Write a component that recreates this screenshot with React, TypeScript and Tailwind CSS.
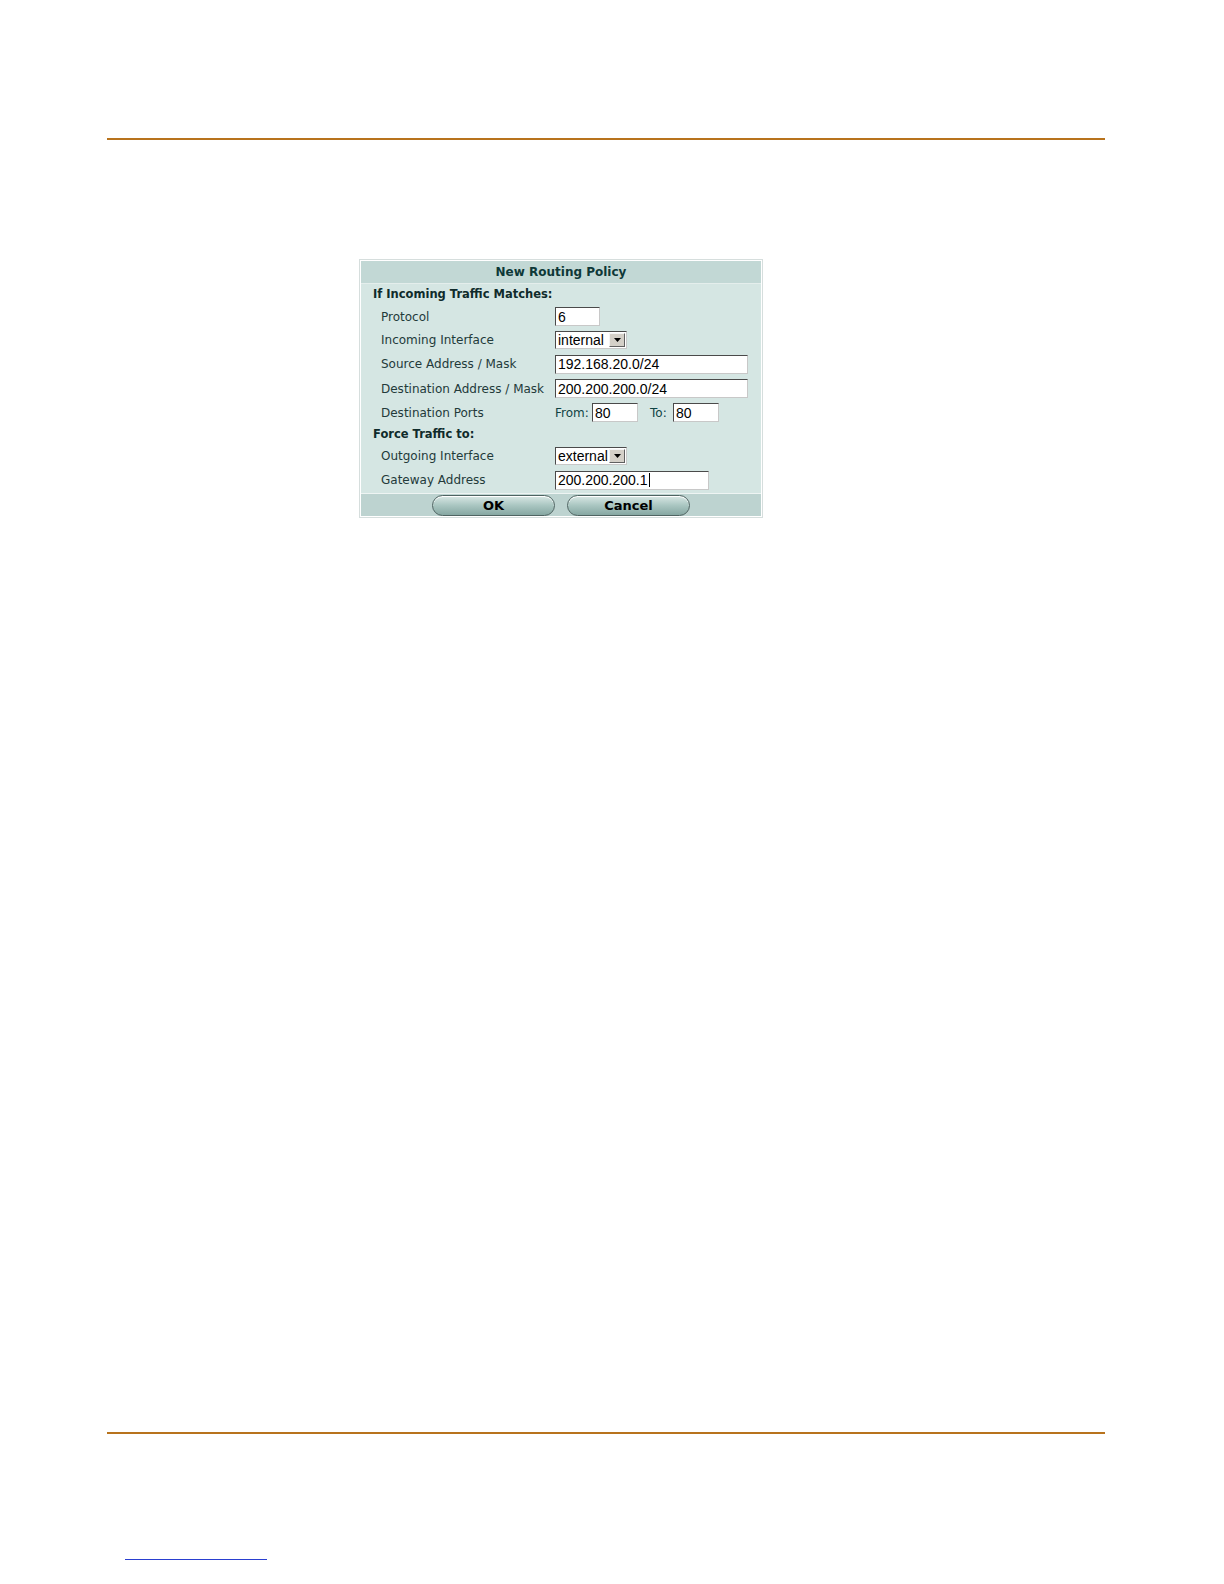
import React from 'react';

const labelFont = { fontFamily: '"DejaVu Sans", Verdana, sans-serif' };
const inputFont = { fontFamily: '"Liberation Sans", Arial, sans-serif' };

function TextBox({ value, width, caret }: { value: string; width: string; caret?: boolean }) {
  return (
    <div
      className={`${width} h-[19px] bg-white border border-t-[#4a4a4a] border-l-[#4a4a4a] border-b-[#c8c8c8] border-r-[#c8c8c8] flex items-center pl-[2px] text-[14px] text-black leading-none`}
      style={inputFont}
    >
      <span>{value}</span>
      {caret && <span className="w-px h-[14px] bg-black ml-px" />}
    </div>
  );
}

function Select({ value }: { value: string }) {
  return (
    <div
      className="w-[72px] h-[18px] bg-white border border-t-[#4a4a4a] border-l-[#4a4a4a] border-b-[#c8c8c8] border-r-[#c8c8c8] flex items-center justify-between text-[14px] text-black leading-none"
      style={inputFont}
    >
      <span className="pl-[2px]">{value}</span>
      <div className="w-[16px] h-[14px] mr-px bg-[#d4d0c8] border border-t-[#f4f4f4] border-l-[#f4f4f4] border-b-[#606060] border-r-[#606060] flex items-center justify-center">
        <svg width="7" height="4" viewBox="0 0 7 4">
          <path d="M0 0h7L3.5 4z" fill="#000" />
        </svg>
      </div>
    </div>
  );
}

function Row({ label, h, children }: { label: string; h: string; children: React.ReactNode }) {
  return (
    <div className={`${h} flex items-center`}>
      <div className="w-[194px] pl-[20px] text-[12px] text-[#233a3a]" style={labelFont}>
        {label}
      </div>
      <div className="flex items-center">{children}</div>
    </div>
  );
}

function Heading({ text, h }: { text: string; h: string }) {
  return (
    <div className={`${h} flex items-center pl-[12px] text-[11.5px] font-bold text-[#0f2b2b]`} style={labelFont}>
      {text}
    </div>
  );
}

function PillButton({ text }: { text: string }) {
  return (
    <button
      className="w-[123px] h-[21px] rounded-full border border-[#4f6462] bg-gradient-to-b from-[#d9e8e5] via-[#a9c6c1] to-[#86a7a2] text-[13px] font-bold text-black leading-none shadow-[inset_0_1px_0_#ffffff]"
      style={labelFont}
    >
      {text}
    </button>
  );
}

export default function App() {
  return (
    <div className="w-full h-screen bg-white overflow-hidden pt-[138px]">
      <div className="ml-[107px] w-[998px] h-[2px] bg-[#b8731d]" />

      <div className="ml-[359px] mt-[119px] w-[404px] border border-[#d6dedd] bg-white p-px">
        <div
          className="h-[23px] bg-[#c2d8d5] border-b border-[#e4eeec] flex items-center justify-center text-[12px] font-bold text-[#0e3838]"
          style={labelFont}
        >
          New Routing Policy
        </div>
        <div className="bg-[#d5e6e3]">
          <Heading text="If Incoming Traffic Matches:" h="h-[21px]" />
          <Row label="Protocol" h="h-[23px]">
            <TextBox value="6" width="w-[45px]" />
          </Row>
          <Row label="Incoming Interface" h="h-[24px]">
            <Select value="internal" />
          </Row>
          <Row label="Source Address / Mask" h="h-[24px]">
            <TextBox value="192.168.20.0/24" width="w-[193px]" />
          </Row>
          <Row label="Destination Address / Mask" h="h-[25px]">
            <TextBox value="200.200.200.0/24" width="w-[193px]" />
          </Row>
          <Row label="Destination Ports" h="h-[23px]">
            <span className="text-[12px] text-[#104343] w-[37px]" style={labelFont}>
              From:
            </span>
            <TextBox value="80" width="w-[46px]" />
            <span className="text-[12px] text-[#104343] ml-[12px] w-[23px]" style={labelFont}>
              To:
            </span>
            <TextBox value="80" width="w-[46px]" />
          </Row>
          <Heading text="Force Traffic to:" h="h-[21px]" />
          <Row label="Outgoing Interface" h="h-[22px]">
            <Select value="external" />
          </Row>
          <Row label="Gateway Address" h="h-[26px]">
            <TextBox value="200.200.200.1" width="w-[154px]" caret />
          </Row>
        </div>
        <div className="h-[23px] bg-[#bdd3d0] border-t border-[#eef4f3] flex items-center justify-center gap-[12px]">
          <PillButton text="OK" />
          <PillButton text="Cancel" />
        </div>
      </div>

      <div className="ml-[107px] mt-[914px] w-[998px] h-[2px] bg-[#b8731d]" />

      <div className="ml-[125px] mt-[125px] w-[142px] h-px bg-[#2a3fd0]" />
    </div>
  );
}
